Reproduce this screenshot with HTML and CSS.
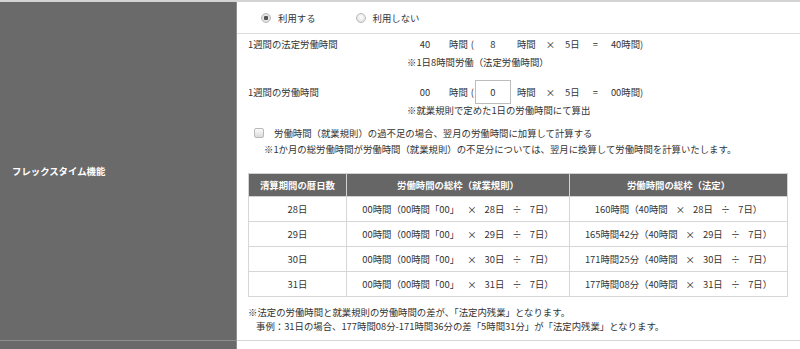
FILE: index.html
```html
<!DOCTYPE html>
<html lang="ja">
<head>
  <meta charset="UTF-8">
  <meta name="viewport" content="width=device-width, initial-scale=1.0">
  <title>フレックスタイム機能</title>
  <link rel="stylesheet" href="styles.css">
</head>
<body>
  <div class="form">
    <div class="form-row">
      <div class="form-head">フレックスタイム機能</div>
      <div class="form-body">
        <div class="use-row">
          <label class="radio"><span class="radio-mark checked"></span>利用する</label>
          <label class="radio"><span class="radio-mark"></span>利用しない</label>
        </div>

        <div class="form-content">
          <div class="hours">
            <div class="hours-label">1週間の法定労働時間</div>
            <div class="hours-value">
              <div class="calc">
                <span class="calc-num">40</span>
                <span class="calc-unit">時間</span>
                <span class="paren">(</span>
                <span class="calc-num">8</span>
                <span class="calc-unit">時間</span>
                <span class="op">×</span>
                <span>5日</span>
                <span class="op eq">=</span>
                <span>40時間)</span>
              </div>
              <div class="note">※1日8時間労働（法定労働時間）</div>
            </div>
          </div>

          <div class="hours hours-next">
            <div class="hours-label">1週間の労働時間</div>
            <div class="hours-value">
              <div class="calc">
                <span class="calc-num">00</span>
                <span class="calc-unit">時間</span>
                <span class="paren">(</span>
                <input class="calc-input" type="text" value="0">
                <span class="calc-unit">時間</span>
                <span class="op">×</span>
                <span>5日</span>
                <span class="op eq">=</span>
                <span>00時間)</span>
              </div>
              <div class="note">※就業規則で定めた1日の労働時間にて算出</div>
            </div>
          </div>

          <label class="check-row"><span class="check-mark"></span>労働時間（就業規則）の過不足の場合、翌月の労働時間に加算して計算する</label>
          <div class="check-note">※1か月の総労働時間が労働時間（就業規則）の不足分については、翌月に換算して労働時間を計算いたします。</div>

          <table class="summary">
            <colgroup>
              <col class="col-days">
              <col class="col-rule">
              <col class="col-legal">
            </colgroup>
            <tr>
              <th>清算期間の暦日数</th>
              <th>労働時間の総枠（就業規則）</th>
              <th>労働時間の総枠（法定）</th>
            </tr>
            <tr>
              <td>28日</td>
              <td>00時間（00時間「00」<span class="op">×</span>28日<span class="op">÷</span>7日）</td>
              <td>160時間（40時間<span class="op">×</span>28日<span class="op">÷</span>7日）</td>
            </tr>
            <tr>
              <td>29日</td>
              <td>00時間（00時間「00」<span class="op">×</span>29日<span class="op">÷</span>7日）</td>
              <td>165時間42分（40時間<span class="op">×</span>29日<span class="op">÷</span>7日）</td>
            </tr>
            <tr>
              <td>30日</td>
              <td>00時間（00時間「00」<span class="op">×</span>30日<span class="op">÷</span>7日）</td>
              <td>171時間25分（40時間<span class="op">×</span>30日<span class="op">÷</span>7日）</td>
            </tr>
            <tr>
              <td>31日</td>
              <td>00時間（00時間「00」<span class="op">×</span>31日<span class="op">÷</span>7日）</td>
              <td>177時間08分（40時間<span class="op">×</span>31日<span class="op">÷</span>7日）</td>
            </tr>
          </table>

          <div class="footnote">※法定の労働時間と就業規則の労働時間の差が、「法定内残業」となります。</div>
          <div class="footnote footnote-example">事例：31日の場合、177時間08分-171時間36分の差「5時間31分」が「法定内残業」となります。</div>
        </div>
      </div>
    </div>

    <div class="form-row">
      <div class="form-head"></div>
      <div class="form-body form-body-empty"></div>
    </div>
  </div>
</body>
</html>
```

FILE: styles.css
```css
body {
  margin: 0;
  font-family: "Noto Sans CJK JP", sans-serif;
  font-size: 9.4px;
  color: #333;
  background: #fff;
}
.form {
  border-top: 2px solid #d3d3d3;
}
.form-row {
  display: flex;
}
.form-head {
  flex: none;
  width: 237px;
  box-sizing: border-box;
  padding-left: 12px;
  display: flex;
  align-items: center;
  background: #6a6a6a;
  color: #fff;
  font-weight: bold;
  border-right: 1px solid #8e8e8e;
  border-bottom: 1px solid #8e8e8e;
}
.form-body {
  flex: 1;
  border-bottom: 1px solid #d6d6d6;
}
.form-body-empty {
  height: 40px;
}
.use-row {
  height: 31px;
  display: flex;
  align-items: center;
  padding-left: 24px;
  border-bottom: 1px solid #dcdcdc;
}
.radio {
  display: inline-flex;
  align-items: center;
}
.radio + .radio {
  margin-left: 40px;
}
.radio-mark {
  width: 10px;
  height: 10px;
  box-sizing: border-box;
  margin-right: 7px;
  border: 1px solid #b9b9b9;
  border-radius: 50%;
  background: radial-gradient(circle at 50% 40%, #fdfdfd, #dadada);
}
.radio-mark.checked {
  background: radial-gradient(circle, #555 0, #555 2px, #e6e6e6 2.5px, #d4d4d4 100%);
}
.form-content {
  padding: 0 11px 7px;
}
.hours {
  display: flex;
}
.hours-next {
  margin-top: 14px;
}
.hours-label {
  width: 159px;
  flex: none;
  line-height: 20px;
}
.calc {
  display: flex;
  align-items: center;
  height: 20px;
  white-space: nowrap;
}
.calc-num {
  width: 36px;
  text-align: center;
}
.calc-unit {
  margin-left: 6px;
}
.paren {
  margin: 0 1px 0 3px;
}
.calc-input {
  width: 36px;
  height: 24px;
  margin: -2px 0;
  padding: 0;
  box-sizing: border-box;
  border: 1px solid #bcbcbc;
  font: inherit;
  color: #333;
  text-align: center;
}
.op {
  margin: 0 10px;
}
.op.eq {
  margin: 0 13px;
}
.note {
  margin-top: 2px;
  line-height: 12px;
}
.check-row {
  display: flex;
  align-items: center;
  margin-top: 9px;
  padding-left: 6px;
  line-height: 16px;
}
.check-mark {
  width: 10px;
  height: 10px;
  box-sizing: border-box;
  margin-right: 10px;
  border: 1px solid #b9b9b9;
  border-radius: 2px;
  background: linear-gradient(#fbfbfb, #dadada);
}
.check-note {
  padding-left: 16px;
  line-height: 16px;
}
.summary {
  margin-top: 16px;
  width: 539px;
  table-layout: fixed;
  border-collapse: collapse;
}
.col-days {
  width: 98px;
}
.col-rule {
  width: 223px;
}
.col-legal {
  width: 218px;
}
.summary th {
  padding: 5px 0;
  line-height: 12px;
  background: #666;
  color: #fff;
  font-weight: bold;
  border: 1px solid #d2d2d2;
}
.summary td {
  padding: 6px 0;
  line-height: 12px;
  text-align: center;
  white-space: nowrap;
  border: 1px solid #d6d6d6;
}
.summary .op {
  margin: 0 8px;
}
.footnote {
  line-height: 14px;
}
.summary + .footnote {
  margin-top: 8px;
}
.footnote-example {
  padding-left: 8px;
}
```
